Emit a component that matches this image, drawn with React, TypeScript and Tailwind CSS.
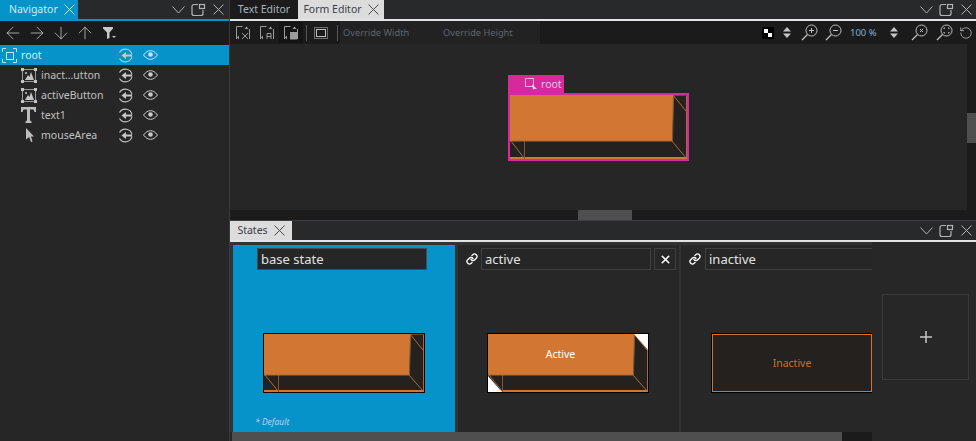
import React from 'react';
import { ArrowDown, ArrowLeft, ArrowRight, ArrowUp, Link, RotateCcw, X } from 'lucide-react';

const PanelControls = () => (
  <div className="flex items-center gap-[6px] text-[#b4b4b4]">
    <svg width="13" height="8" viewBox="0 0 13 8" fill="none" stroke="currentColor">
      <path d="M.5.5l6 6.500 6-6.500" />
    </svg>
    <svg width="15" height="14" viewBox="0 0 15 14" fill="none" stroke="currentColor" strokeWidth="1.2">
      <path d="M7 1.500H3a2 2 0 0 0-2 2v7a2 2 0 0 0 2 2h7a2 2 0 0 0 2-2V7" />
      <rect x="8.500" y="1.500" width="5" height="4" />
    </svg>
    <svg width="11" height="11" viewBox="0 0 11 11" stroke="currentColor" className="ml-[1px]">
      <path d="M.5.5l10 10M10.500.5l-10 10" />
    </svg>
  </div>
);

const TabClose = ({ dark = false }: { dark?: boolean }) => (
  <svg width="11" height="11" viewBox="0 0 11 11" stroke={dark ? '#4a4a4a' : '#d5eaf5'} className="ml-[6px]">
    <path d="M.5.5l10 10M10.500.5l-10 10" />
  </svg>
);

const SwitchIcon = () => (
  <svg width="15" height="15" viewBox="0 0 15 15" fill="none" stroke="#c8c8c8" strokeWidth="1.1">
    <path d="M1.500 4.500a6.800 6.800 0 0 1 12.500 2M1.500 10.500a6.800 6.800 0 0 0 12.500-2" />
    <path d="M14 7.500H6.500" strokeWidth="2" />
    <path d="M8 4L3.500 7.500 8 11z" fill="#c8c8c8" stroke="none" />
  </svg>
);

const EyeIcon = ({ color }: { color: string }) => (
  <svg width="15" height="10" viewBox="0 0 15 10" fill="none" stroke={color}>
    <path d="M.5 5C3 1.800 5 .7 7.500.7s4.500 1.100 7 4.300c-2.500 3.200-4.500 4.300-7 4.300S3 8.200.5 5z" />
    <circle cx="7.500" cy="4.500" r="2.300" fill={color} stroke="none" />
  </svg>
);

const ImageNode = () => (
  <svg width="16" height="15" viewBox="0 0 16 15" fill="none">
    <rect x="1.500" y="1.500" width="13" height="12" stroke="#9a9a9a" />
    <path d="M4 12l3-5 1.500 2L10 4l3 8z" fill="#c4c4c4" />
    <circle cx="5" cy="5" r="1" fill="#c4c4c4" />
    <path d="M0 0h3v3H0zM13 0h3v3h-3zM0 12h3v3H0zM13 12h3v3h-3z" fill="#c4c4c4" />
  </svg>
);

const RootNode = () => (
  <svg width="17" height="17" viewBox="0 0 17 17" fill="none" stroke="#bfe3f3">
    <rect x="5.500" y="5.500" width="7" height="7" />
    <path d="M1.500 5V1.500H5M12 1.500h3.500V5M1.500 12v3.500H5M12 15.500h3.500V12" />
  </svg>
);

const TextNode = () => (
  <svg width="17" height="16" viewBox="0 0 17 16" fill="#bdbdbd">
    <path d="M1 0h15v5h-1.500l-1-2.500H10v11l1.500 1V16h-6v-1.500l1.500-1v-11H3.500l-1 2.500H1z" />
  </svg>
);

const CursorNode = () => (
  <svg width="10" height="15" viewBox="0 0 10 15" fill="#bdbdbd">
    <path d="M1 0l8 8.500H6l1.500 5-1.500.5-1.800-5L1 11.500z" />
  </svg>
);

const nodes = [
  { name: 'root', icon: <RootNode />, indent: 'pl-[1px]', textPad: 'ml-[3px]', selected: true },
  { name: 'inact...utton', icon: <ImageNode />, indent: 'pl-[21px]', textPad: 'ml-[4px]', selected: false },
  { name: 'activeButton', icon: <ImageNode />, indent: 'pl-[21px]', textPad: 'ml-[4px]', selected: false },
  { name: 'text1', icon: <TextNode />, indent: 'pl-[20px]', textPad: 'ml-[4px]', selected: false },
  { name: 'mouseArea', icon: <CursorNode />, indent: 'pl-[25px]', textPad: 'ml-[6px]', selected: false },
];

const Navigator = () => (
  <aside className="flex h-full w-[230px] shrink-0 flex-col border-r border-[#3a3a3a] bg-[#262626]">
    <div className="flex h-[19px] shrink-0 items-center justify-between bg-[#28292b] pr-[5px]">
      <div className="flex h-full w-[78px] items-center bg-[#0693c9] pl-[9px] text-[#cfe9f5]">
        Navigator
        <TabClose />
      </div>
      <PanelControls />
    </div>
    <div className="h-[2px] shrink-0 bg-[#0693c9]" />
    <div className="flex h-[24px] shrink-0 items-center gap-[4px] bg-[#1b1b1b] pl-[3px] text-[#d0d0d0]">
      <ArrowLeft size={20} strokeWidth={0.9} />
      <ArrowRight size={20} strokeWidth={0.9} />
      <ArrowDown size={20} strokeWidth={0.9} />
      <ArrowUp size={20} strokeWidth={0.9} />
      <svg width="13" height="12" viewBox="0 0 13 12" fill="#c8c8c8" className="ml-[4px]">
        <path d="M0 0h10v1.500L6.500 5.500V11L4 12V5.500L0 1.500zM9 9h4l-2 2z" />
      </svg>
    </div>
    {nodes.map((node) => (
      <div
        key={node.name}
        className={`relative flex h-[20px] items-center ${node.indent} ${node.selected ? 'bg-[#0693c9] text-[#d5edf7]' : 'text-[#c0c0c0]'}`}
      >
        {node.icon}
        <span className={node.textPad}>{node.name}</span>
        <div className="absolute left-[118px] top-[3px]"><SwitchIcon /></div>
        <div className="absolute left-[143px] top-[5px]"><EyeIcon color={node.selected ? '#c9e6f3' : '#c8c8c8'} /></div>
      </div>
    ))}
  </aside>
);

const ToolIcon = ({ glyph, active = false }: { glyph: React.ReactNode; active?: boolean }) => (
  <div className={`flex h-[21px] w-[24px] items-center justify-center ${active ? 'bg-[#141414]' : ''}`}>
    <svg width="14" height="14" viewBox="0 0 14 14" fill="none" stroke="#9c9c9c">
      <path d="M.5 13V.5h6M13.500 3V13" />
      <path d="M8.500 3L10.500 0.500 12.500 3z" fill="#9c9c9c" stroke="none" />
      <path d="M3 9.500L1 11.500 3 13.500z" fill="#9c9c9c" stroke="none" />
      {glyph}
    </svg>
  </div>
);

const Spinner = () => (
  <svg width="8" height="11" viewBox="0 0 8 11" fill="#c4c4c4">
    <path d="M4 0l4 4.500H0zM0 6.500h8L4 11z" />
  </svg>
);

const Zoomer = ({ glyph }: { glyph: React.ReactNode }) => (
  <svg width="17" height="17" viewBox="0 0 17 17" fill="none" stroke="#c0c0c0">
    <circle cx="10.500" cy="6.500" r="5.500" />
    <path d="M6.500 10.500L1 16" strokeWidth="1.2" />
    {glyph}
  </svg>
);

const FormToolbar = () => (
  <div className="flex h-[23px] shrink-0 items-center bg-[#1b1b1b] pl-[1px]">
    <ToolIcon glyph={<path d="M6 7l6 6M12 7l-6 6" />} />
    <ToolIcon glyph={<path d="M7 13V7.500h4V13M7 10.500h4" />} />
    <ToolIcon active glyph={<rect x="6.500" y="6.500" width="6" height="6.500" fill="#9c9c9c" />} />
    <div className="ml-[3px] h-[16px] w-px bg-[#555]" />
    <svg width="14" height="12" viewBox="0 0 14 12" fill="none" stroke="#c0c0c0" className="ml-[7px]">
      <rect x="2.500" y="2.500" width="9" height="7" />
      <rect x=".5" y=".5" width="13" height="11" strokeDasharray="1 1" />
    </svg>
    <div className="ml-[9px] h-[16px] w-px bg-[#555]" />
    <div className="ml-[2px] flex h-full w-[200px] items-center bg-[#222222] pl-[3px] text-[9.25px] text-[#5b6670]">
      <span className="w-[100px]">Override Width</span>
      <span>Override Height</span>
    </div>
    <div className="ml-auto flex items-center text-[#c0c0c0]">
      <svg width="12" height="12" viewBox="0 0 12 12" className="mr-[9px]">
        <rect width="12" height="12" fill="#000" />
        <path d="M2 2h4v4H2zM6 6h4v4H6z" fill="#fff" />
      </svg>
      <Spinner />
      <div className="ml-[10px]"><Zoomer glyph={<path d="M8 6.500h5M10.500 4v5" />} /></div>
      <div className="ml-[7px]"><Zoomer glyph={<path d="M8 6.500h5" />} /></div>
      <span className="ml-[8px] w-[30px] whitespace-nowrap text-[9.5px] text-[#7fb0d0]">100 %</span>
      <div className="ml-[10px]"><Spinner /></div>
      <div className="ml-[13px]"><Zoomer glyph={<path d="M9 5l3 3M12 5l-3 3" />} /></div>
      <div className="ml-[8px]"><Zoomer glyph={<path d="M8 5V4h1M12 4h1v1M8 8v1h1M13 8v1h-1" />} /></div>
      <RotateCcw size={14} strokeWidth={1.3} className="ml-[6px] mr-[3px]" />
    </div>
  </div>
);

// the orange item with its bevel triangles, as the designer paints it
const ItemArt = ({ width, height, faceBottom, corners }: { width: number; height: number; faceBottom: number; corners?: string }) => {
  const right = width - 15;
  const diag = 'M' + (right + 1) + ' 0L' + (width - 1) + ' 16M1 ' + faceBottom + 'L14 ' + (height - 1) + 'M' + right + ' ' + faceBottom + 'L' + (width - 1) + ' ' + (height - 1);
  return (
    <svg width={width} height={height} viewBox={`0 0 ${width} ${height}`} className="block">
      <rect width={width} height={height} fill="#24211f" />
      <path d={`M${width - 0.5} 0V${height}`} stroke="#a86a38" />
      <path d={`M${right + 1} .5H${width}`} stroke="#6a4a32" />
      <path d={`M0 ${height - 1}H${width}`} stroke="#d17733" strokeWidth="2" />
      <path d={`M0 0H${right + 2}L${right} ${faceBottom}H0z`} fill="#d17733" />
      <path d={`M14.500 ${faceBottom}V${height}`} stroke="#80553a" />
      <path d={`M${right + 1.500} 0L${right + 0.500} ${faceBottom}`} stroke="#80553a" />
      <path d={`M${right} ${faceBottom}H0`} stroke="#b06a34" />
      <path d={diag} fill="none" stroke="#b06a34" />
      {corners && (
        <>
          <path d={`M${right + 1} 0H${width}V16z`} fill={corners} />
          <path d={`M0 ${faceBottom + 1}L14 ${height}H0z`} fill={corners} />
        </>
      )}
    </svg>
  );
};

const FormCanvas = () => (
  <div className="relative h-[176px] shrink-0 bg-[#262626]">
    <div className="flex h-[166px] flex-col pl-[278px] pt-[31px]">
      <div className="flex h-[18px] w-[56px] items-center bg-[#d6299e] pl-[17px] text-[#f3c4e4]">
        <svg width="12" height="12" viewBox="0 0 12 12" fill="none" stroke="#f0b4dd" className="mr-[4px]">
          <rect x=".5" y=".5" width="8" height="8" />
          <path d="M7 6l5 5H9l-1 1z" fill="#f0d0e8" stroke="none" />
        </svg>
        root
      </div>
      <div className="w-[181px] border-2 border-[#d6299e]">
        <ItemArt width={177} height={64} faceBottom={46} />
      </div>
    </div>
    <div className="flex h-[10px] bg-[#1b1b1b] pl-[348px]">
      <div className="h-full w-[54px] bg-[#4f4f4f]" />
    </div>
    <div className="absolute right-0 top-0 h-[166px] w-[9px] bg-[#1b1b1b] pt-[69px]">
      <div className="h-[30px] w-full bg-[#4f4f4f]" />
    </div>
  </div>
);

const StateCard = ({ name, active, removable, className, children }: { name: string; active?: boolean; removable?: boolean; className: string; children: React.ReactNode }) => (
  <div className={`flex shrink-0 flex-col pt-[3px] ${className} ${active ? 'bg-[#0693c9]' : 'bg-[#272727]'}`}>
    <div className="flex h-[22px] items-center pl-[8px]">
      <div className={removable ? 'w-[15px]' : 'w-[16px]'}>
        {!active && <Link size={12} strokeWidth={2.6} className="text-white" />}
      </div>
      <div className={`flex h-[22px] w-[170px] items-center border ${active ? 'border-[#4a4a4a]' : 'border-[#3f3f3f]'} bg-[#262626] pl-[3px] text-[13px] text-[#e2e2e2]`}>
        {name}
      </div>
      {removable && (
        <div className="ml-[3px] flex h-[22px] w-[22px] items-center justify-center border border-[#3f3f3f]">
          <X size={13} strokeWidth={3} className="text-white" />
        </div>
      )}
    </div>
    <div className="flex flex-1 flex-col pl-[30px] pt-[63px]">{children}</div>
  </div>
);

const States = () => (
  <div className="flex min-h-0 flex-1">
    <div className="flex w-[642px] shrink-0 flex-col overflow-hidden bg-[#272727]">
      <div className="flex min-h-0 flex-1 bg-[#333333] pl-[3px] pt-[3px]">
        <StateCard name="base state" active className="w-[222px]">
          <div className="w-fit border border-black">
            <ItemArt width={160} height={58} faceBottom={41} />
          </div>
          <span className="mt-[25px] -ml-[8px] text-[8.5px] italic text-[#a8d9ee]">* Default</span>
        </StateCard>
        <StateCard name="active" removable className="ml-[3px] w-[221px]">
          <div className="relative -ml-[1px] w-fit border border-black">
            <ItemArt width={160} height={58} faceBottom={41} corners="#ffffff" />
            <div className="absolute left-0 top-0 flex h-[41px] w-[145px] items-center justify-center text-white">Active</div>
          </div>
        </StateCard>
        <StateCard name="inactive" className="ml-[2px] w-[222px]">
          <div className="w-fit border border-black">
            <div className="flex h-[58px] w-[160px] items-center justify-center border border-[#cc7433] bg-[#24211f] text-[#c46f32]">
              Inactive
            </div>
          </div>
        </StateCard>
      </div>
      <div className="ml-[2px] h-[9px] shrink-0 bg-[#1b1b1b]">
        <div className="h-full w-[610px] bg-[#4f4f4f]" />
      </div>
    </div>
    <div className="flex flex-1 items-start bg-[#272727] pl-[10px] pt-[52px]">
      <div className="flex h-[86px] w-[87px] items-center justify-center border border-[#3a3a3a] text-[#c8c8c8]">
        <svg width="12" height="12" viewBox="0 0 12 12" stroke="currentColor" strokeWidth="1.5">
          <path d="M6 0v12M0 6h12" />
        </svg>
      </div>
    </div>
  </div>
);

export default function App() {
  return (
    <div className="flex h-[441px] w-[976px] overflow-hidden bg-[#262626] text-[10.5px] leading-none" style={{ fontFamily: '"Noto Sans", sans-serif' }}>
      <Navigator />
      <main className="flex min-w-0 flex-1 flex-col">
        <div className="flex h-[19px] shrink-0 items-center justify-between bg-[#28292b] pr-[4px]">
          <div className="flex h-full">
            <div className="flex w-[68px] items-center justify-center bg-[#1b1b1b] text-[#a8b4bc]">Text Editor</div>
            <div className="flex w-[86px] items-center justify-center bg-[#dcdcdc] text-[#3a3f48]">
              Form Editor
              <TabClose dark />
            </div>
          </div>
          <PanelControls />
        </div>
        <div className="h-[2px] shrink-0 bg-[#e4e4e4]" />
        <FormToolbar />
        <FormCanvas />
        <div className="flex h-[20px] shrink-0 items-center justify-between border-t border-[#3f3f3f] bg-[#28292b] pr-[4px]">
          <div className="flex h-full w-[62px] items-center justify-center bg-[#dcdcdc] text-[#3a3f48]">
            States
            <TabClose dark />
          </div>
          <PanelControls />
        </div>
        <div className="h-[2px] shrink-0 bg-[#e4e4e4]" />
        <States />
      </main>
    </div>
  );
}
